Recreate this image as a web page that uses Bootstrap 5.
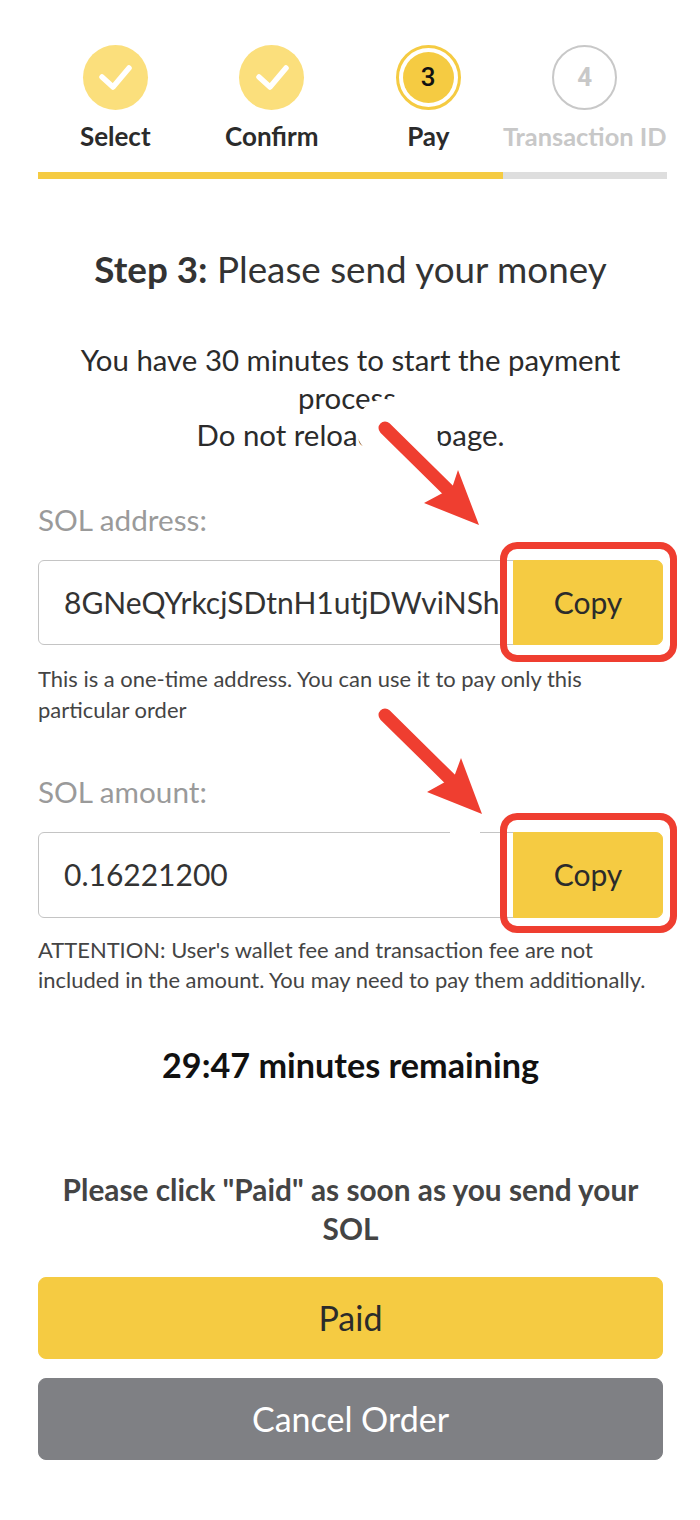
<!DOCTYPE html>
<html lang="en">
<head>
  <meta charset="UTF-8" />
  <meta name="viewport" content="width=device-width, initial-scale=1.0"/>
  <title>Pay</title>
  <link href="https://cdn.jsdelivr.net/npm/bootstrap@5.3.3/dist/css/bootstrap.min.css" rel="stylesheet"/>
  <style>
    body {
      background-color: #fff;
      color: #333;
      font-family: Lato, "Liberation Sans", sans-serif;
    }

    .page-wrap {
      position: relative;
      width: 700px;
      height: 1520px;
      padding: 45px 37px 0 38px;
      overflow: hidden;
    }

    .stepper {
      width: 626px;
      margin-left: -1px;
    }

    .step-item {
      width: 156.5px;
      flex: none;
    }

    .step-dot {
      width: 65px;
      height: 65px;
      border-radius: 50%;
      font-size: 26px;
      font-weight: 500;
      font-family: Roboto, sans-serif;
    }

    .step-done { background-color: #fbdf7c; }
    .step-current {
      color: #111;
      background-color: #f5cb42;
      background-clip: content-box;
      padding: 4px;
      border: 3px solid #f5cb42;
    }
    .step-todo {
      color: #c8c8c8;
      font-weight: 700;
      border: 2px solid #c8c8c8;
    }

    .step-label {
      margin-top: 9px;
      font-size: 26px;
      line-height: 34px;
      font-weight: 700;
      color: #2b2b2b;
      white-space: nowrap;
    }
    .step-label-off {
      font-size: 25.4px;
      color: #c8c8c8;
    }

    .step-progress {
      width: 629px;
      height: 7px;
      margin-top: 19px;
      border-radius: 0;
      background-color: #dedede;
    }
    .step-progress .progress-bar { background-color: #f5cb42; }

    .step-title {
      margin: 68px 0 0;
      font-size: 36.8px;
      line-height: 44px;
      font-weight: 400;
    }

    .step-note {
      margin: 50px 0 0;
      font-size: 29.4px;
      line-height: 37.5px;
      color: #2b2b2b;
    }

    .field-label {
      margin: 0 0 22px;
      font-size: 29.7px;
      line-height: 36px;
      color: #9a9a9a;
    }
    .label-first { margin-top: 48px; }
    .label-second { margin-top: 49px; }

    .addr-group { height: 85.5px; }
    .addr-group .form-control {
      padding: 0 12px 0 25px;
      font-size: 30px;
      color: #333;
      border-color: #c4c4c4;
      border-radius: 6px 0 0 6px;
    }
    .addr-group .btn { width: 150px; }

    .btn-yellow, .btn-yellow:hover {
      color: #2b2b2b;
      background-color: #f5cb42;
      border-color: #f5cb42;
      font-size: 30px;
      border-radius: 0 7px 7px 0;
    }

    .field-help {
      margin: 19px 0 0;
      font-size: 21.95px;
      line-height: 30.5px;
      color: #444;
    }
    .field-help-tight { margin-top: 17px; }

    .timer-text {
      margin: 49px 0 0;
      font-size: 34.2px;
      line-height: 40px;
      font-weight: 700;
      color: #111;
    }

    .paid-note {
      margin: 85px 0 0;
      font-size: 29.8px;
      line-height: 39px;
      font-weight: 700;
      color: #444;
    }

    .btn-stack {
      margin-top: 29px;
      gap: 19px;
    }

    .btn-wide {
      height: 82px;
      font-size: 34px;
      border-radius: 8px;
    }
    .btn-cancel, .btn-cancel:hover {
      color: #fff;
      background-color: #7f8084;
      border-color: #7f8084;
    }

    .callout-box {
      position: absolute;
      left: 500px;
      width: 177px;
      height: 120px;
      border: 7px solid #ef3e30;
      border-radius: 17px;
    }
    .box-one { top: 542px; }
    .box-two { top: 813px; }

    .callout-arrow {
      position: absolute;
      width: 140px;
      height: 130px;
      overflow: visible;
    }
    .arrow-one { left: 360px; top: 420px; }
    .arrow-two { left: 362px; top: 708px; }
  </style>
</head>
<body>

  <div class="page-wrap">
    <div class="stepper d-flex text-center">
      <div class="step-item d-flex flex-column align-items-center">
        <div class="step-dot step-done d-flex align-items-center justify-content-center">
          <svg width="34" height="28" viewBox="0 0 34 28"><path d="M4 13l11 10L31 4" fill="none" stroke="#fff" stroke-width="5.5" stroke-linecap="round" stroke-linejoin="round"/></svg>
        </div>
        <div class="step-label">Select</div>
      </div>
      <div class="step-item d-flex flex-column align-items-center">
        <div class="step-dot step-done d-flex align-items-center justify-content-center">
          <svg width="34" height="28" viewBox="0 0 34 28"><path d="M4 13l11 10L31 4" fill="none" stroke="#fff" stroke-width="5.5" stroke-linecap="round" stroke-linejoin="round"/></svg>
        </div>
        <div class="step-label">Confirm</div>
      </div>
      <div class="step-item d-flex flex-column align-items-center">
        <div class="step-dot step-current d-flex align-items-center justify-content-center">3</div>
        <div class="step-label">Pay</div>
      </div>
      <div class="step-item d-flex flex-column align-items-center">
        <div class="step-dot step-todo d-flex align-items-center justify-content-center">4</div>
        <div class="step-label step-label-off">Transaction ID</div>
      </div>
    </div>

    <div class="progress step-progress">
      <div class="progress-bar" style="width: 73.9%"></div>
    </div>

    <h2 class="step-title text-center"><span class="fw-bold">Step 3:</span> Please send your money</h2>

    <p class="step-note text-center">You have 30 minutes to start the payment process.<br>Do not reload this page.</p>

    <div class="field-label label-first">SOL address:</div>
    <div class="input-group addr-group">
      <input type="text" class="form-control" value="8GNeQYrkcjSDtnH1utjDWviNSh" readonly>
      <button class="btn btn-yellow" type="button">Copy</button>
    </div>
    <p class="field-help">This is a one-time address. You can use it to pay only this particular order</p>

    <div class="field-label label-second">SOL amount:</div>
    <div class="input-group addr-group">
      <input type="text" class="form-control" value="0.16221200" readonly>
      <button class="btn btn-yellow" type="button">Copy</button>
    </div>
    <p class="field-help field-help-tight">ATTENTION: User's wallet fee and transaction fee are not included in the amount. You may need to pay them additionally.</p>

    <p class="timer-text text-center">29:47 minutes remaining</p>

    <p class="paid-note text-center">Please click "Paid" as soon as you send your SOL</p>

    <div class="d-grid btn-stack">
      <button class="btn btn-yellow btn-wide" type="button">Paid</button>
      <button class="btn btn-cancel btn-wide" type="button">Cancel Order</button>
    </div>

    <!-- arrows and red boxes sit over the form, white halo hides what is under them -->
    <svg class="callout-arrow arrow-one" viewBox="0 0 140 130">
      <path d="M25 8L54 37" fill="none" stroke="#fff" stroke-width="58" stroke-linecap="round"/>
      <path d="M25 8L92 74" fill="none" stroke="#ef3e30" stroke-width="13" stroke-linecap="round"/>
      <path d="M119 105L64 83L92 68L98 50Z" fill="#ef3e30"/>
    </svg>
    <svg class="callout-arrow arrow-two" viewBox="0 0 140 130">
      <rect x="88" y="118" width="30" height="8" fill="#fff"/>
      <path d="M23 7L90 73" fill="none" stroke="#ef3e30" stroke-width="13" stroke-linecap="round"/>
      <path d="M120 106L65 84L92 69L99 50Z" fill="#ef3e30"/>
    </svg>
    <div class="callout-box box-one"></div>
    <div class="callout-box box-two"></div>
  </div>

</body>
</html>
